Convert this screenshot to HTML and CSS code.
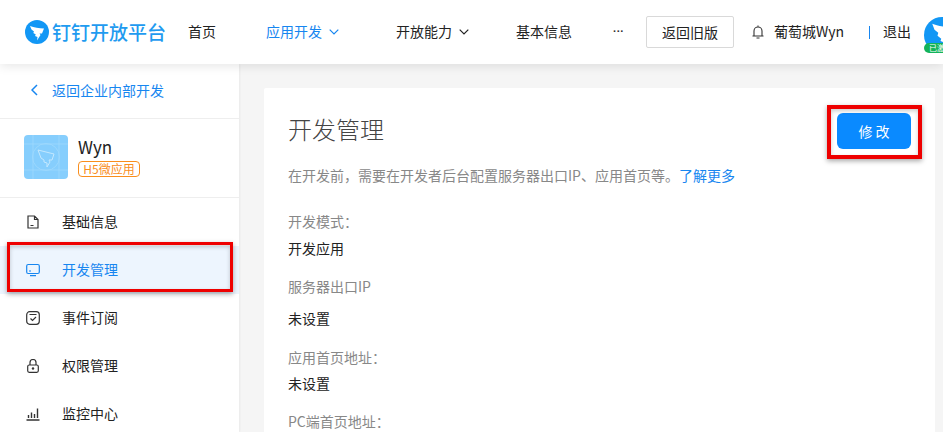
FILE: index.html
```html
<!DOCTYPE html>
<html lang="zh-CN">
<head>
<meta charset="utf-8">
<title>开发管理</title>
<link rel="stylesheet" href="styles.css">
</head>
<body>
<div class="page">
  <header class="topbar">
    <div class="brand">
      <svg class="brand-icon" viewBox="0 0 24 24"><circle cx="12" cy="12" r="12" fill="#1297f5"/><path d="M5 6C9 7.500 14 8.500 19 8.500L17 13.500 14.500 13.500 15.500 15 12 20.500 12.500 17 10 16 10.800 14.600 8.300 13 9 11.500 6.500 9.500Z" fill="#fff"/></svg>
      <span class="brand-text">钉钉开放平台</span>
    </div>
    <nav class="nav">
      <a class="nav-item nav-home">首页</a>
      <a class="nav-item nav-apps is-active">应用开发<svg class="chev" viewBox="0 0 10 6"><path d="M.7.7 5 5 9.3.7" fill="none" stroke="currentColor" stroke-width="1.2"/></svg></a>
      <a class="nav-item nav-cap">开放能力<svg class="chev" viewBox="0 0 10 6"><path d="M.7.7 5 5 9.3.7" fill="none" stroke="currentColor" stroke-width="1.2"/></svg></a>
      <a class="nav-item nav-info">基本信息</a>
      <a class="nav-item nav-more">···</a>
    </nav>
    <button class="old-btn">返回旧版</button>
    <svg class="bell" viewBox="0 0 12 14"><path d="M2 10.500V6a4 4 0 0 1 8 0v4.500M.5 11h11M4.500 13h3M6 2V.5" fill="none" stroke="#333" stroke-width="1.100"/></svg>
    <span class="user">葡萄城Wyn</span>
    <span class="sep"></span>
    <span class="logout">退出</span>
    <div class="avatar">
      <svg class="avatar-icon" viewBox="0 0 24 24"><circle cx="12" cy="12" r="12" fill="#1297f5"/><path d="M5.500 4.500C9 6 14 7 24 7L24 14 18 14 18.500 16 13 21 13.500 17 11 16 11.500 14.500 9 12.500 9.500 10.500 7 8.500Z" fill="#fff"/></svg>
      <span class="avatar-badge">已激活</span>
    </div>
  </header>

  <div class="body">
    <aside class="sidebar">
      <a class="back"><svg class="back-icon" viewBox="0 0 7 12"><path d="M6 1 1 6l5 5" fill="none" stroke="#1786f0" stroke-width="1.500"/></svg>返回企业内部开发</a>
      <div class="app">
        <div class="app-icon">
          <svg viewBox="0 0 44 44"><rect width="44" height="44" fill="#86cefd"/><path d="M0 9h44M0 35h44M9 0v44M35 0v44" stroke="#a0d9fd" stroke-width=".8"/><circle cx="22" cy="22" r="13.500" fill="none" stroke="#a0d9fd" stroke-width=".8"/><path d="M14 15 30 19 28 25 25 25 26 27 23 32 23 28 20 27 20 25 17 23Z" fill="none" stroke="#c4e8fe" stroke-width="1"/></svg>
        </div>
        <div class="app-meta">
          <div class="app-name">Wyn</div>
          <span class="app-tag">H5微应用</span>
        </div>
      </div>
      <ul class="menu">
        <li class="menu-item"><svg class="menu-icon" viewBox="0 0 14 14"><path d="M2 1h6.500L12 4.500V13H2zM8.500 1v3.500H12M4.500 10.500h3" fill="none" stroke="#333" stroke-width="1.200"/></svg>基础信息</li>
        <li class="menu-item is-active"><svg class="menu-icon" viewBox="0 0 14 14"><rect x=".7" y="1.500" width="12.600" height="9" rx="1.500" fill="none" stroke="#1786f0" stroke-width="1.200"/><path d="M3 8h2M4 12.700h6" stroke="#1786f0" stroke-width="1.200"/></svg>开发管理</li>
        <li class="menu-item"><svg class="menu-icon" viewBox="0 0 14 14"><rect x=".7" y=".7" width="12.600" height="12.600" rx="3" fill="none" stroke="#333" stroke-width="1.200"/><path d="M3.500 3.500h7M4.500 7.500 6.500 9.500 10 6" fill="none" stroke="#333" stroke-width="1.200"/></svg>事件订阅</li>
        <li class="menu-item"><svg class="menu-icon" viewBox="0 0 14 14"><rect x="1.700" y="6" width="10.600" height="7.300" rx="1.500" fill="none" stroke="#333" stroke-width="1.200"/><path d="M4 6V3.500a3 3 0 0 1 6 0V6" fill="none" stroke="#333" stroke-width="1.200"/><circle cx="7" cy="9.500" r="1.200" fill="#333"/></svg>权限管理</li>
        <li class="menu-item"><svg class="menu-icon" viewBox="0 0 14 14"><path d="M.5 13h13M2.500 11V8M5.500 11V5.500M8.500 11V7M11.500 11V1.500" fill="none" stroke="#333" stroke-width="1.400"/></svg>监控中心</li>
      </ul>
    </aside>

    <main class="content">
      <section class="card">
        <div class="card-head">
          <h1 class="title">开发管理</h1>
          <button class="edit-btn">修 改</button>
        </div>
        <p class="desc">在开发前，需要在开发者后台配置服务器出口IP、应用首页等。<a class="link">了解更多</a></p>
        <div class="label label-first">开发模式：</div>
        <div class="value value-a">开发应用</div>
        <div class="label label-b">服务器出口IP</div>
        <div class="value value-b">未设置</div>
        <div class="label label-c">应用首页地址：</div>
        <div class="value value-c">未设置</div>
        <div class="label label-d">PC端首页地址：</div>
      </section>
    </main>
  </div>

  <div class="mark mark-menu"></div>
  <div class="mark mark-btn"></div>
</div>
</body>
</html>
```

FILE: styles.css
```css
* { box-sizing: border-box; }
html, body { margin: 0; padding: 0; }
body {
  width: 943px;
  height: 432px;
  overflow: hidden;
  font-family: "Noto Sans CJK SC", "Liberation Sans", sans-serif;
  font-size: 14px;
  color: #222;
  background: #f5f5f5;
}
.page { position: relative; width: 943px; height: 432px; overflow: hidden; }

.topbar {
  position: relative;
  z-index: 2;
  display: flex;
  align-items: center;
  height: 64px;
  padding-left: 25px;
  background: #fff;
  box-shadow: 0 2px 10px rgba(0, 0, 0, .1);
  white-space: nowrap;
}
.brand { display: flex; align-items: center; width: 163px; flex: none; }
.brand-icon { width: 24px; height: 24px; flex: none; }
.brand-text { margin-left: 3px; font-size: 19px; line-height: 24px; color: #1f9bf0; font-weight: 500; }
.nav { display: flex; align-items: center; flex: none; width: 458px; padding-bottom: 2px; }
.nav-item { display: flex; align-items: center; flex: none; line-height: 20px; color: #222; }
.nav-home { width: 78px; }
.nav-apps { width: 130px; }
.nav-cap { width: 120px; }
.nav-info { width: 97px; }
.nav-more { font-family: "Liberation Sans", sans-serif; font-size: 11px; font-weight: 700; color: #333; }
.nav-item.is-active { color: #1786f0; }
.chev { width: 10px; height: 6px; margin: 2px 0 0 7px; }
.old-btn {
  flex: none;
  width: 88px;
  height: 32px;
  margin-right: 18px;
  padding: 0;
  border: 1px solid #d9d9d9;
  border-radius: 2px;
  background: #fff;
  font: inherit;
  color: #222;
}
.bell { width: 12px; height: 14px; flex: none; margin-right: 10px; }
.user { width: 95px; flex: none; color: #222; padding-bottom: 2px; }
.sep { width: 1px; height: 13px; background: #1786f0; flex: none; margin-right: 13px; }
.logout { flex: none; width: 41px; color: #222; padding-bottom: 2px; }
.avatar { position: relative; flex: none; width: 36px; height: 36px; margin-top: 6px; }
.avatar-icon { display: block; width: 36px; height: 36px; }
.avatar-badge {
  position: absolute;
  left: 0;
  bottom: 0;
  width: 36px;
  height: 10px;
  border-radius: 5px;
  background: #14b35a;
  color: #fff;
  font-size: 8px;
  line-height: 10px;
  padding-left: 5px;
  white-space: nowrap;
  overflow: hidden;
}

.body { display: flex; height: 368px; }
.sidebar { width: 239px; flex: none; background: #fff; box-shadow: 1px 0 2px rgba(0, 0, 0, .05); }
.back {
  display: flex;
  align-items: center;
  height: 55px;
  padding: 0 0 2px 31px;
  border-bottom: 1px solid #eee;
  color: #1786f0;
}
.back-icon { width: 7px; height: 12px; margin-right: 14px; }
.app { display: flex; height: 79px; padding: 16px 0 0 24px; border-bottom: 1px solid #eee; }
.app-icon { width: 44px; height: 44px; border-radius: 4px; overflow: hidden; flex: none; }
.app-icon svg { display: block; width: 44px; height: 44px; }
.app-meta { margin-left: 10px; }
.app-name { font-size: 17px; line-height: 24px; color: #222; }
.app-tag {
  display: block;
  width: 62px;
  height: 16px;
  margin-top: 2px;
  border: 1px solid #f98e1d;
  border-radius: 4px;
  color: #f98e1d;
  font-size: 12px;
  line-height: 14px;
  text-align: center;
  white-space: nowrap;
}
.menu { list-style: none; margin: 0; padding: 0; }
.menu-item { display: flex; align-items: center; height: 48px; padding: 0 0 2px 26px; color: #222; }
.menu-item.is-active { background: #edf5fe; color: #1786f0; }
.menu-icon { width: 14px; height: 14px; margin: 2px 22px 0 0; flex: none; }

.content { flex: 1; min-width: 0; padding: 24px 8px 0 25px; }
.card { height: 400px; padding: 25px 24px 0; background: #fff; border-radius: 2px; }
.card-head { display: flex; justify-content: space-between; align-items: flex-start; }
.title { margin: -1px 0 0; font-size: 24px; font-weight: 300; line-height: 34px; color: #444; }
.edit-btn {
  width: 74px;
  height: 36px;
  padding: 0;
  border: 0;
  border-radius: 6px;
  background: #0a8aff;
  color: #fff;
  font: inherit;
}
.desc { margin: 16px 0 0; line-height: 20px; color: #888; }
.link { color: #1786f0; }
.label { line-height: 20px; color: #888; }
.value { line-height: 20px; color: #222; }
.label-first { margin-top: 26px; }
.value-a { margin-top: 7px; }
.label-b { margin-top: 18px; }
.value-b { margin-top: 12px; }
.label-c { margin-top: 19px; }
.value-c { margin-top: 6px; }
.label-d { margin-top: 18px; }

.mark {
  position: absolute;
  z-index: 3;
  border: 3px solid #ee0000;
  box-shadow: 0 2px 5px rgba(0, 0, 0, .35), inset 0 2px 4px rgba(0, 0, 0, .2);
}
.mark-menu { left: 7px; top: 242px; width: 226px; height: 50px; }
.mark-btn { left: 827px; top: 105px; width: 95px; height: 54px; border-width: 4px; }
```
